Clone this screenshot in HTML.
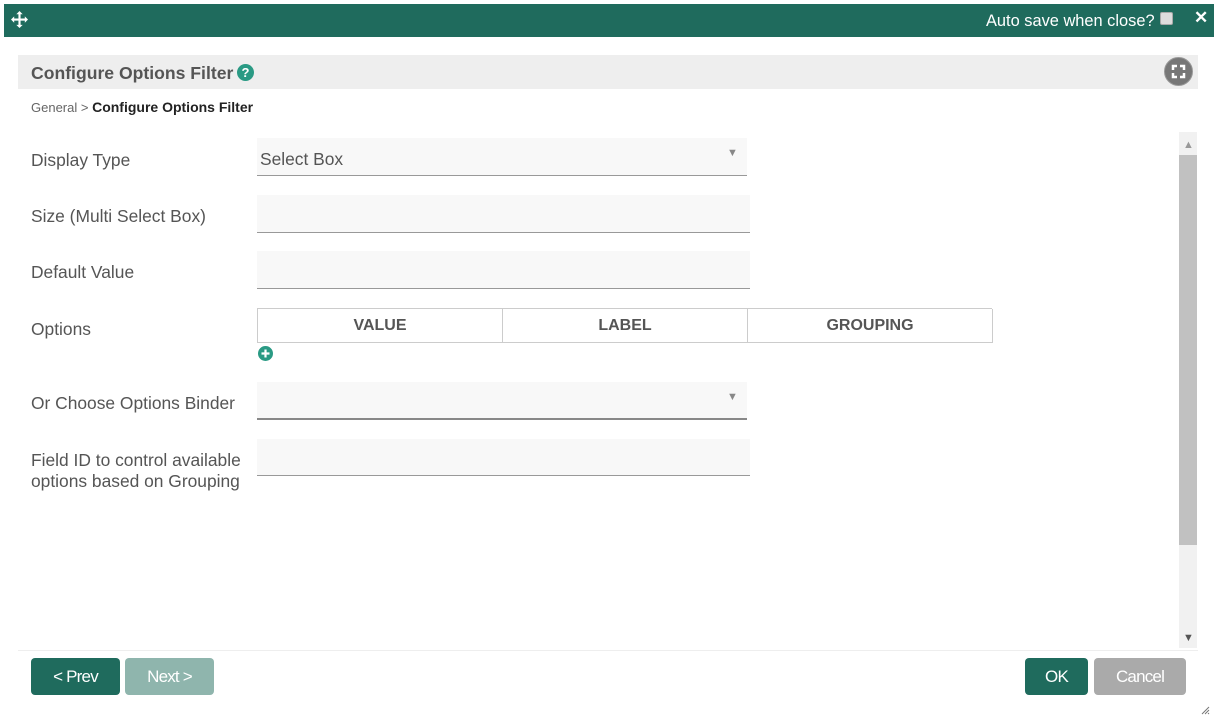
<!DOCTYPE html>
<html><head><style>
*{box-sizing:border-box;margin:0;padding:0}
body{width:1215px;height:720px;background:#fff;font-family:"Liberation Sans",sans-serif;position:relative;overflow:hidden;color:#555}
.a{position:absolute}
.top{left:4px;top:4px;width:1210px;height:33px;background:#1f6b5d;color:#fff}
.inp{background:#f8f8f8;border-bottom:1px solid #999;height:38px}
.lbl{font-size:17.4px;color:#555;left:31px}
.th{position:absolute;top:0;height:34px;border-right:1px solid #ccc;text-align:center;font-weight:bold;font-size:16px;line-height:34px;color:#555}
.btn{top:658px;height:37px;border-radius:4px;color:#fff;font-size:17px;line-height:37px;text-align:center;letter-spacing:-0.8px}
</style></head><body>
<div class="a top">
 <svg class="a" style="left:7px;top:7px" width="17" height="17" viewBox="0 0 16 16"><path fill="#fff" d="M8 0l3 3H9v4h4V5l3 3-3 3V9H9v4h2l-3 3-3-3h2V9H3v2L0 8l3-3v2h4V3H5z"/></svg>
 <span class="a" style="left:982px;top:8px;font-size:16.4px">Auto save when close?</span>
 <span class="a" style="left:1156px;top:8px;width:13px;height:13px;background:#ddd;border:1px solid #aaa;border-radius:2px"></span>
 <span class="a" style="left:1190px;top:4px;font-size:17px;font-weight:bold">✕</span>
</div>
<div class="a" style="left:18px;top:55px;width:1180px;height:34px;background:#eee"></div>
<div class="a" style="left:31px;top:63px;font-size:17.6px;font-weight:bold;color:#555">Configure Options Filter</div>
<div class="a" style="left:237px;top:64px;width:17px;height:17px;border-radius:50%;background:#2a9a84;color:#fff;font-size:13px;font-weight:bold;text-align:center;line-height:17px">?</div>
<div class="a" style="left:1164px;top:57px;width:29px;height:29px;border-radius:50%;background:#777;border:1px solid #999"><svg width="27" height="27" viewBox="0 0 27 27"><path d="M8 12V8h4M15 8h4v4M19 15v4h-4M12 19H8v-4" stroke="#fff" stroke-width="2.5" fill="none"/></svg></div>
<div class="a" style="left:31px;top:99px;font-size:13px;color:#666">General &gt; <b style="color:#222;font-size:14px">Configure Options Filter</b></div>

<div class="a lbl" style="top:150px">Display Type</div>
<div class="a inp" style="left:257px;top:138px;width:490px"><span class="a" style="left:3px;top:11px;font-size:17.4px;color:#555">Select Box</span><span class="a" style="left:470px;top:9px;font-size:11px;color:#888">▼</span></div>
<div class="a lbl" style="top:206px">Size (Multi Select Box)</div>
<div class="a inp" style="left:257px;top:195px;width:493px"></div>
<div class="a lbl" style="top:262px">Default Value</div>
<div class="a inp" style="left:257px;top:251px;width:493px"></div>
<div class="a lbl" style="top:319px">Options</div>
<div class="a" style="left:257px;top:308px;width:735px;height:35px;border:1px solid #ccc;border-right:none">
 <div class="th" style="left:0;width:245px">VALUE</div>
 <div class="th" style="left:245px;width:245px">LABEL</div>
 <div class="th" style="left:490px;width:245px">GROUPING</div>
</div>
<div class="a" style="left:258px;top:346px;width:15px;height:15px;border-radius:50%;background:#2a9a84"><svg width="15" height="15"><path d="M7.5 3.5v8M3.5 7.5h8" stroke="#fff" stroke-width="2.2"/></svg></div>
<div class="a lbl" style="top:393px">Or Choose Options Binder</div>
<div class="a inp" style="left:257px;top:382px;width:490px;border-bottom:2px solid #888"><span class="a" style="left:470px;top:9px;font-size:11px;color:#888">▼</span></div>
<div class="a lbl" style="top:450px;line-height:21px">Field ID to control available<br>options based on Grouping</div>
<div class="a inp" style="left:257px;top:439px;width:493px;height:37px"></div>

<div class="a" style="left:1179px;top:132px;width:18px;height:516px;background:#f1f1f1"></div>
<div class="a" style="left:1179px;top:155px;width:18px;height:390px;background:#c1c1c1"></div>
<div class="a" style="left:1183px;top:139px;font-size:11px;color:#999">▲</div>
<div class="a" style="left:1183px;top:632px;font-size:11px;color:#555">▼</div>
<div class="a" style="left:18px;top:650px;width:1180px;height:1px;background:#eee"></div>

<div class="a btn" style="left:31px;width:89px;background:#1f6b5d">&lt; Prev</div>
<div class="a btn" style="left:125px;width:89px;background:#8fb5ad">Next &gt;</div>
<div class="a btn" style="left:1025px;width:63px;background:#1f6b5d">OK</div>
<div class="a btn" style="left:1094px;width:92px;background:#aaa">Cancel</div>
<svg class="a" style="left:1200px;top:705px" width="10" height="10"><path d="M9 2L2 9M9 5L5 9M9 8L8 9" stroke="#777" stroke-width="1"/></svg>
</body></html>
